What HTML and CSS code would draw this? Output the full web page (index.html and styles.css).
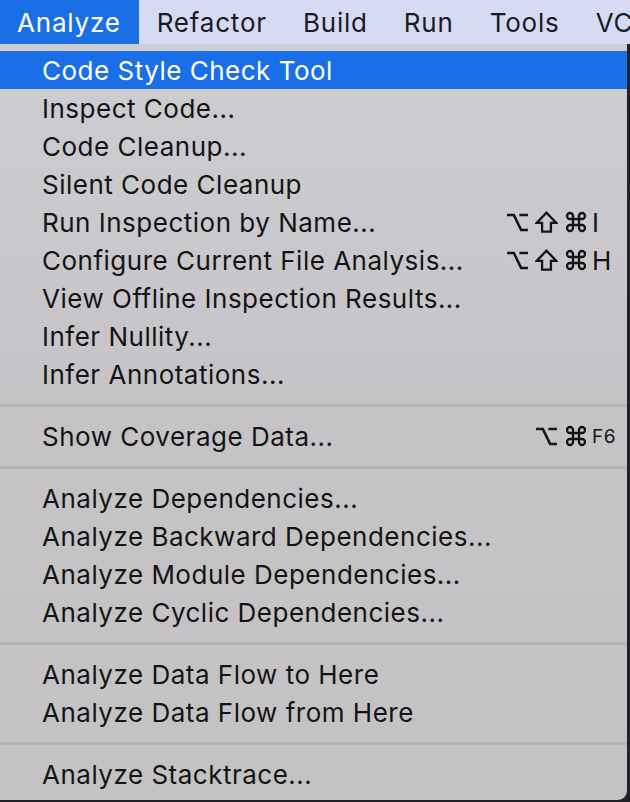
FILE: index.html
```html
<!DOCTYPE html>
<html>
<head>
<meta charset="utf-8">
<link rel="stylesheet" href="styles.css">
</head>
<body>
<div class="menubar">
  <span class="mb-item active">Analyze</span>
  <span class="mb-item">Refactor</span>
  <span class="mb-item">Build</span>
  <span class="mb-item">Run</span>
  <span class="mb-item">Tools</span>
  <span class="mb-item">VCS</span>
</div>
<div class="stage">
  <div class="menu">
    <div class="row selected"><span class="label">Code Style Check Tool</span></div>
    <div class="row"><span class="label">Inspect Code...</span></div>
    <div class="row"><span class="label">Code Cleanup...</span></div>
    <div class="row"><span class="label">Silent Code Cleanup</span></div>
    <div class="row"><span class="label">Run Inspection by Name...</span><span class="mods">
      <span class="g"><svg class="ic opt" viewBox="0 0 24 20"><path d="M1 2.2H8.2L15.8 17.8H23M14 2.2H23"/></svg></span>
      <span class="g"><svg class="ic shift" viewBox="0 0 24 24"><path d="M12 1.8L22.3 12.4H16.6V21.6H7.4V12.4H1.7Z"/></svg></span>
      <span class="g"><svg class="ic cmd" viewBox="0 0 24 24"><path d="M18 3a3 3 0 0 0-3 3v12a3 3 0 0 0 3 3 3 3 0 0 0 3-3 3 3 0 0 0-3-3H6a3 3 0 0 0-3 3 3 3 0 0 0 3 3 3 3 0 0 0 3-3V6a3 3 0 0 0-3-3 3 3 0 0 0-3 3 3 3 0 0 0 3 3h12a3 3 0 0 0 3-3 3 3 0 0 0-3-3z"/></svg></span>
    </span><span class="key">I</span></div>
    <div class="row"><span class="label">Configure Current File Analysis...</span><span class="mods">
      <span class="g"><svg class="ic opt" viewBox="0 0 24 20"><path d="M1 2.2H8.2L15.8 17.8H23M14 2.2H23"/></svg></span>
      <span class="g"><svg class="ic shift" viewBox="0 0 24 24"><path d="M12 1.8L22.3 12.4H16.6V21.6H7.4V12.4H1.7Z"/></svg></span>
      <span class="g"><svg class="ic cmd" viewBox="0 0 24 24"><path d="M18 3a3 3 0 0 0-3 3v12a3 3 0 0 0 3 3 3 3 0 0 0 3-3 3 3 0 0 0-3-3H6a3 3 0 0 0-3 3 3 3 0 0 0 3 3 3 3 0 0 0 3-3V6a3 3 0 0 0-3-3 3 3 0 0 0-3 3 3 3 0 0 0 3 3h12a3 3 0 0 0 3-3 3 3 0 0 0-3-3z"/></svg></span>
    </span><span class="key">H</span></div>
    <div class="row"><span class="label">View Offline Inspection Results...</span></div>
    <div class="row"><span class="label">Infer Nullity...</span></div>
    <div class="row"><span class="label">Infer Annotations...</span></div>
    <div class="sep"></div>
    <div class="row"><span class="label">Show Coverage Data...</span><span class="mods">
      <span class="g"><svg class="ic opt" viewBox="0 0 24 20"><path d="M1 2.2H8.2L15.8 17.8H23M14 2.2H23"/></svg></span>
      <span class="g"><svg class="ic cmd" viewBox="0 0 24 24"><path d="M18 3a3 3 0 0 0-3 3v12a3 3 0 0 0 3 3 3 3 0 0 0 3-3 3 3 0 0 0-3-3H6a3 3 0 0 0-3 3 3 3 0 0 0 3 3 3 3 0 0 0 3-3V6a3 3 0 0 0-3-3 3 3 0 0 0-3 3 3 3 0 0 0 3 3h12a3 3 0 0 0 3-3 3 3 0 0 0-3-3z"/></svg></span>
    </span><span class="key small">F6</span></div>
    <div class="sep"></div>
    <div class="row"><span class="label">Analyze Dependencies...</span></div>
    <div class="row"><span class="label">Analyze Backward Dependencies...</span></div>
    <div class="row"><span class="label">Analyze Module Dependencies...</span></div>
    <div class="row"><span class="label">Analyze Cyclic Dependencies...</span></div>
    <div class="sep"></div>
    <div class="row"><span class="label">Analyze Data Flow to Here</span></div>
    <div class="row"><span class="label">Analyze Data Flow from Here</span></div>
    <div class="sep"></div>
    <div class="row"><span class="label">Analyze Stacktrace...</span></div>
  </div>
</div>
</body>
</html>
```
FILE: styles.css
```css
html, body {
  margin: 0;
  padding: 0;
}
body {
  width: 630px;
  height: 802px;
  overflow: hidden;
  background: #222226;
  font-family: "Inter", "Liberation Sans", sans-serif;
  color: #141414;
}
.menubar {
  height: 44px;
  background: #d6daf3;
  display: flex;
  align-items: stretch;
  white-space: nowrap;
  overflow: hidden;
}
.mb-item {
  display: flex;
  align-items: center;
  flex-shrink: 0;
  padding: 0 18px 0 18px;
  font-size: 26px;
  letter-spacing: 0.8px;
  color: #1a1a26;
}
.mb-item.active {
  padding-left: 17px;
  background: #1b6fe6;
  color: #ffffff;
}
.stage {
  display: flex;
  height: 758px;
}
.menu {
  width: 627px;
  height: 756px;
  box-sizing: border-box;
  padding-top: 7px;
  background: linear-gradient(180deg, #cdcdd2 0%, #c6c3c7 50%, #c5c2c5 100%);
  border-radius: 0 0 9px 0;
  display: flex;
  flex-direction: column;
}
.row {
  height: 38px;
  display: flex;
  align-items: center;
  padding-left: 42px;
  font-size: 26px;
  letter-spacing: 0.5px;
  white-space: nowrap;
}
.row.selected {
  background: #1a6fe8;
  color: #ffffff;
}
.label {
  flex: 1;
}
.mods {
  display: flex;
  align-items: center;
}
.g {
  width: 29px;
  display: flex;
  justify-content: center;
  align-items: center;
}
.ic {
  display: block;
  fill: none;
  stroke: #141414;
  stroke-width: 2.4;
  stroke-linejoin: miter;
  stroke-linecap: butt;
}
.ic.opt {
  width: 23px;
  height: 19px;
  stroke-width: 2.6;
}
.ic.shift {
  width: 23px;
  height: 23px;
}
.ic.cmd {
  width: 24px;
  height: 24px;
  stroke-width: 2.3;
}
.key {
  width: 35px;
  padding-left: 2px;
  letter-spacing: 0;
}
.key.small {
  font-size: 19px;
  letter-spacing: 0.5px;
}
.sep {
  height: 24px;
  display: flex;
  align-items: center;
}
.sep::before {
  content: "";
  display: block;
  width: 100%;
  height: 3px;
  background: #b6b3b7;
}
```
